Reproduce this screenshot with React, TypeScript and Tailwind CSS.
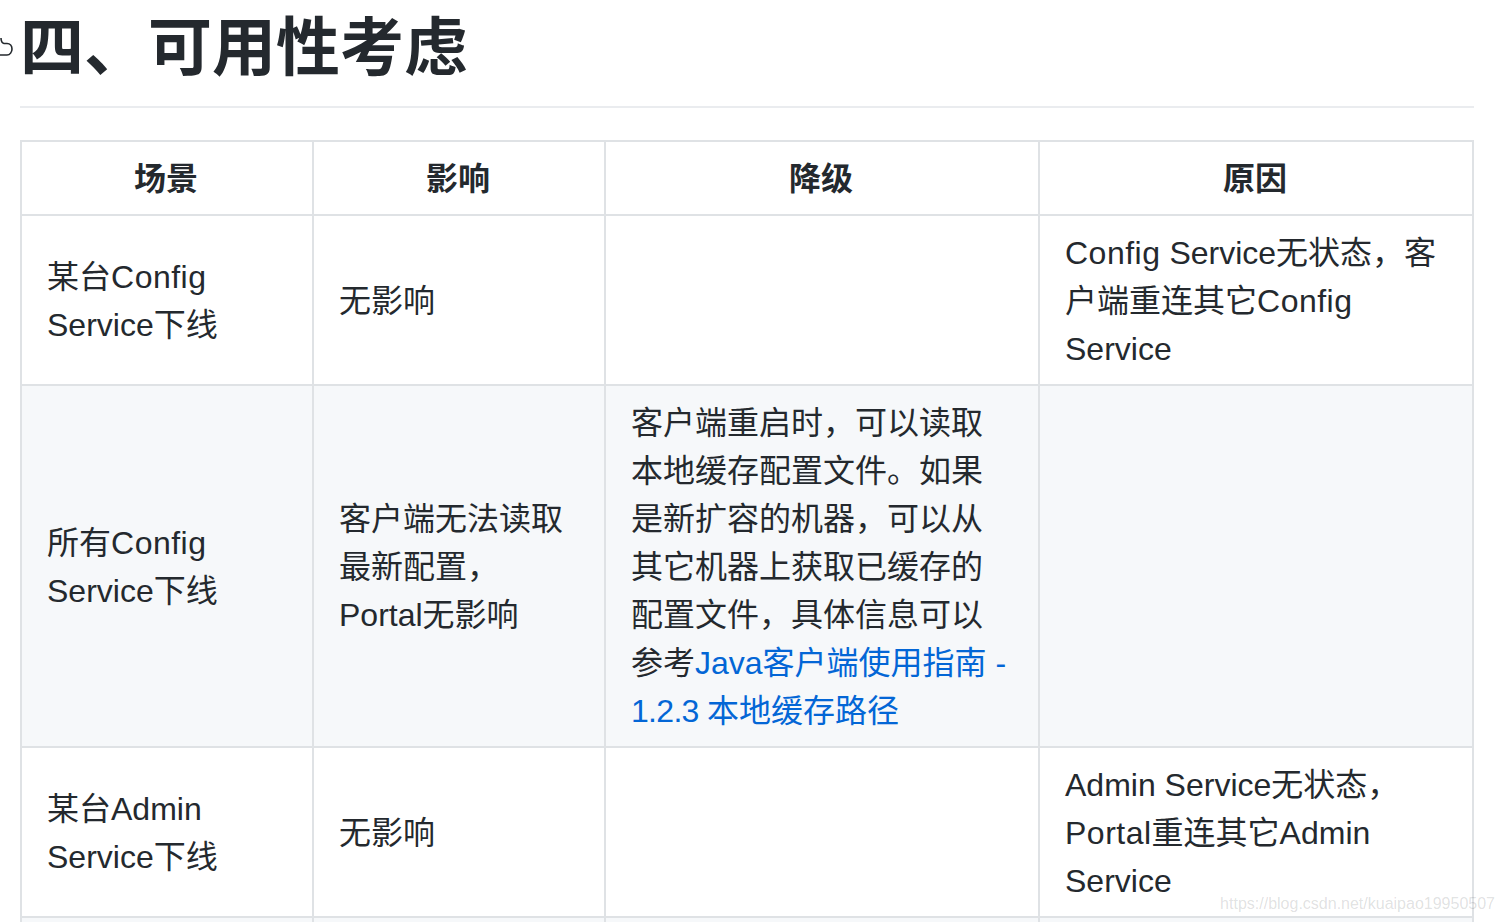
const font = "font-['Liberation_Sans','Noto_Sans_CJK_SC',sans-serif]";

function Wide({ children }: { children: string }) {
  return <span className="tracking-[0.5px]">{children}</span>;
}

const rows = [
  {
    scene: (
      <>
        某台<Wide>Config</Wide> Service下线
      </>
    ),
    impact: "无影响",
    fallback: null,
    reason: (
      <>
        <Wide>Config</Wide> Service无状态，客户端重连其它<Wide>Config</Wide> Service
      </>
    ),
  },
  {
    scene: (
      <>
        所有<Wide>Config</Wide> Service下线
      </>
    ),
    impact: "客户端无法读取最新配置，Portal无影响",
    fallback: (
      <>
        客户端重启时，可以读取本地缓存配置文件。如果是新扩容的机器，可以从其它机器上获取已缓存的配置文件，具体信息可以参考
        <a className="text-[#0366d6]" href="#">
          Java客户端使用指南 - <span className="tracking-[-0.7px]">1.2.3 </span>本地缓存路径
        </a>
      </>
    ),
    reason: null,
  },
  {
    scene: "某台Admin Service下线",
    impact: "无影响",
    fallback: null,
    reason: (
      <>
        Admin Service无状态，<Wide>Portal</Wide>重连其它Admin Service
      </>
    ),
  },
];

const cell = "border-2 border-[#dfe2e5] pl-[25px] pr-[27px] pt-[13px] pb-[11px] align-middle";
const head = "border-2 border-[#dfe2e5] pl-[25px] pr-[27px] pt-[13px] pb-[11px] text-center font-bold";

export default function App() {
  return (
    <div className={`relative h-[922px] overflow-hidden bg-white pl-5 pr-[30px] text-[32px] leading-[48px] text-[#24292e] ${font}`}>
      <h2 className="relative mb-8 border-b-2 border-[#eaecef] pt-[8px] pb-[18px] text-[64px] font-semibold leading-[80px]">
        <svg className="absolute left-[-20px] top-[36px]" width="14" height="22" viewBox="0 0 14 22" fill="none" stroke="#24292e" strokeWidth="1.6">
          <path d="M1 2 C1 5 2 7 4 7.5 H7 C10 7.5 12 10 12 13 C12 16 10 19 7 19 H0" />
        </svg>
        四、可用性考虑
      </h2>
      <table className="w-[1454px] table-fixed border-collapse">
        <colgroup>
          <col className="w-[292px]" />
          <col className="w-[292px]" />
          <col className="w-[434px]" />
          <col className="w-[434px]" />
        </colgroup>
        <thead>
          <tr>
            <th className={head}>场景</th>
            <th className={head}>影响</th>
            <th className={head}>降级</th>
            <th className={head}>原因</th>
          </tr>
        </thead>
        <tbody>
          {rows.map((row, i) => (
            <tr key={i} className={i % 2 === 1 ? "bg-[#f6f8fa]" : "bg-white"}>
              <td className={cell}>{row.scene}</td>
              <td className={cell}>{row.impact}</td>
              <td className={cell}>{row.fallback}</td>
              <td className={cell}>{row.reason}</td>
            </tr>
          ))}
          <tr className="bg-[#f6f8fa]">
            <td className={`${cell} h-[72px]`} />
            <td className={cell} />
            <td className={cell} />
            <td className={cell} />
          </tr>
        </tbody>
      </table>
      <div className="absolute right-[9px] top-[894px] text-[16px] leading-[20px] text-[#24292e]/15">
        https://blog.csdn.net/kuaipao19950507
      </div>
    </div>
  );
}
